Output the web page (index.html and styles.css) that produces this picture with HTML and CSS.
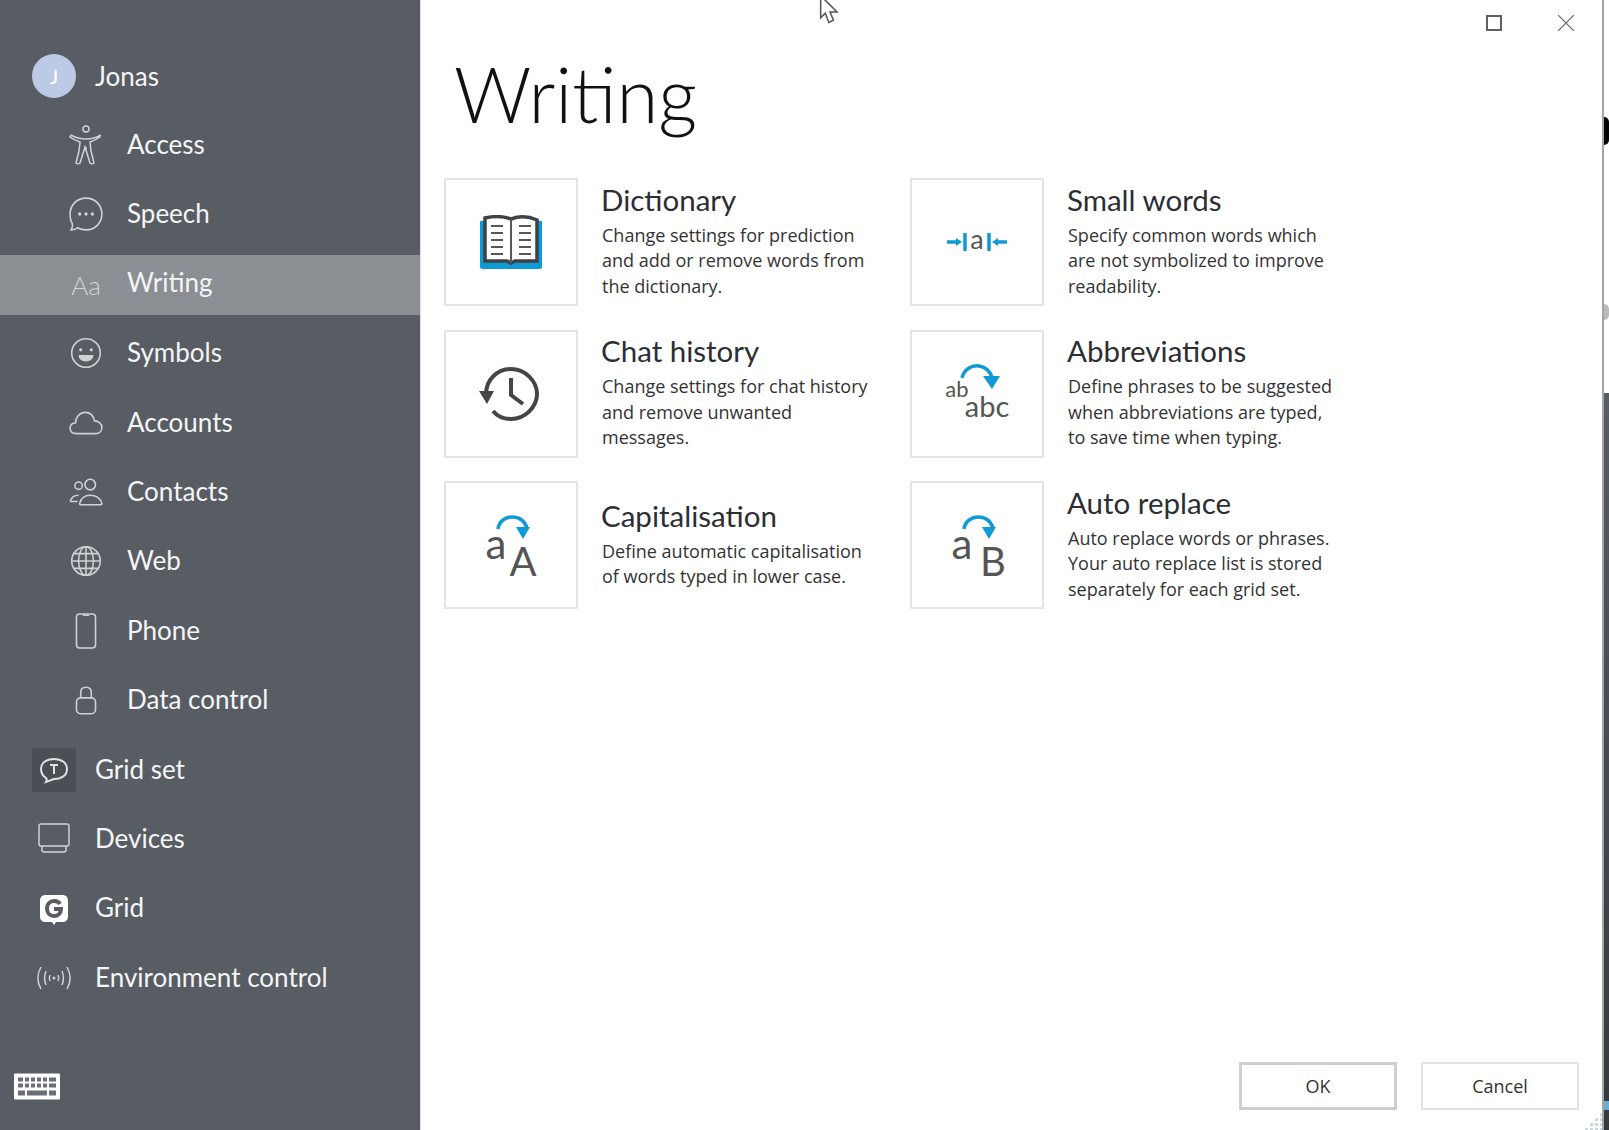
FILE: index.html
```html
<!DOCTYPE html>
<html lang="en">
<head>
  <meta charset="UTF-8">
  <title>Writing</title>
  <link rel="stylesheet" href="styles.css">
</head>
<body>
  <div class="window">
    <aside class="sidebar">
      <ul class="menu">
        <li class="item top user">
          <span class="icon avatar">J</span>
          <span>Jonas</span>
        </li>
        <li class="item sub">
          <svg class="icon tall" viewBox="0 0 34 40"><circle cx="17" cy="4" r="3"/><path d="M2 10c5 3 9 4 15 4s10-1 15-4M2 10l-1 2c4 3 7 4 10 5l-1 9-3 12c1 1 3 1 4 0l5-16 5 16c1 1 3 1 4 0l-3-12-1-9c3-1 6-2 10-5l-1-2M17 22v4"/></svg>
          <span>Access</span>
        </li>
        <li class="item sub">
          <svg class="icon" viewBox="0 0 34 34"><path d="M17 2c9 0 15 7 15 15s-6 15-15 15c-3 0-6-1-8-2-2 2-4 2-6 2 1-2 2-3 1-6-2-3-2-6-2-9C2 9 8 2 17 2z"/><circle class="fill" cx="11" cy="17" r="1.6"/><circle class="fill" cx="17" cy="17" r="1.6"/><circle class="fill" cx="23" cy="17" r="1.6"/></svg>
          <span>Speech</span>
        </li>
        <li class="item sub active">
          <span class="icon glyph">Aa</span>
          <span>Writing</span>
        </li>
        <li class="item sub">
          <svg class="icon" viewBox="0 0 34 34"><circle cx="17" cy="17" r="13.500"/><circle class="fill" cx="12" cy="14" r="1.500"/><circle class="fill" cx="22" cy="14" r="1.500"/><path class="fill" d="M10 19h14c0 4-3 6-7 6s-7-2-7-6z"/></svg>
          <span>Symbols</span>
        </li>
        <li class="item sub">
          <svg class="icon" viewBox="0 0 34 34"><path d="M8 27c-4 0-6-2-6-5s2-5 5-5c0-5 4-10 9-10 5 0 8 3 9 8 4 0 7 3 7 6s-2 6-6 6z"/></svg>
          <span>Accounts</span>
        </li>
        <li class="item sub">
          <svg class="icon" viewBox="0 0 34 34"><circle cx="10" cy="11" r="3.500"/><circle cx="21" cy="10" r="5"/><path d="M11 28c1-5 5-8 10-8s10 3 11 8c0 1-1 1-2 1H12c-1 0-1 0-1-1zM2 26c1-4 4-6 8-6M2 26h7"/></svg>
          <span>Contacts</span>
        </li>
        <li class="item sub">
          <svg class="icon" viewBox="0 0 34 34"><circle cx="17" cy="17" r="13.500"/><ellipse cx="17" cy="17" rx="7" ry="13.500"/><path d="M17 3.500v27M3.500 17h27M5 10h24M5 24h24"/></svg>
          <span>Web</span>
        </li>
        <li class="item sub">
          <svg class="icon" viewBox="0 0 34 34"><rect x="8" y="1" width="18" height="32" rx="3"/><path d="M14 2h6"/></svg>
          <span>Phone</span>
        </li>
        <li class="item sub">
          <svg class="icon" viewBox="0 0 34 34"><rect x="8" y="15" width="18" height="15" rx="4"/><path d="M12 15v-5c0-3 2-5 5-5s5 2 5 5v5"/></svg>
          <span>Data control</span>
        </li>
        <li class="item top">
          <span class="icon tile">
            <svg class="tile-svg" viewBox="0 0 30 30"><path d="M15 4c8 0 13 4 13 10s-5 10-13 10l-8 3c1-2 1-3 0-4-3-2-5-5-5-9C2 8 7 4 15 4z"/><path d="M11 10h8M15 10v9"/></svg>
          </span>
          <span>Grid set</span>
        </li>
        <li class="item top">
          <svg class="icon" viewBox="0 -1 34 36"><rect x="2" y="2" width="30" height="22" rx="2"/><path d="M5 24v4c0 1 1 2 2 2h20c1 0 2-1 2-2v-4"/></svg>
          <span>Devices</span>
        </li>
        <li class="item top">
          <svg class="icon" viewBox="-1 -3 36 36"><path class="solid" d="M9 2h16c4 0 6 2 6 6v15c0 4-2 6-6 6h-6l-2 3-2-3H9c-4 0-6-2-6-6V8c0-4 2-6 6-6z"/><path class="cut" d="M23 11c-1-2-3-3-6-3-4 0-7 3-7 7.500s3 7.500 7 7.500 7-3 7-7h-7"/></svg>
          <span>Grid</span>
        </li>
        <li class="item top">
          <svg class="icon" viewBox="-5 -6 44 36"><circle class="fill" cx="17" cy="12" r="1.500"/><path d="M13 9c-1 2-1 4 0 6M21 9c1 2 1 4 0 6M9 5c-2 5-2 9 0 14M25 5c2 5 2 9 0 14M4 1c-4 7-4 15 0 22M30 1c4 7 4 15 0 22"/></svg>
          <span>Environment control</span>
        </li>
      </ul>
      <svg class="keyboard" viewBox="0 0 48 28"><rect class="kb-body" x="1" y="1" width="46" height="26" rx="1"/><g class="kb-keys"><rect x="5" y="5" width="5" height="4"/><rect x="12" y="5" width="4" height="4"/><rect x="18" y="5" width="4" height="4"/><rect x="24" y="5" width="4" height="4"/><rect x="30" y="5" width="4" height="4"/><rect x="36" y="5" width="7" height="4"/><rect x="5" y="11" width="5" height="4"/><rect x="12" y="11" width="4" height="4"/><rect x="18" y="11" width="4" height="4"/><rect x="24" y="11" width="4" height="4"/><rect x="30" y="11" width="4" height="4"/><rect x="36" y="11" width="7" height="4"/><rect x="5" y="18" width="7" height="5"/><rect x="14" y="18" width="20" height="5"/><rect x="36" y="18" width="7" height="5"/></g></svg>
    </aside>

    <main class="content">
      <div class="title-bar">
        <span class="win-max"></span>
        <svg class="win-close" viewBox="0 0 16 16"><path d="M0 0l16 16M16 0L0 16"/></svg>
      </div>
      <h1>Writing</h1>
      <div class="cards">
        <div class="card">
          <div class="thumb">
            <svg width="62" height="54" viewBox="0 0 62 54"><path class="blue-fill" d="M0 6h62v46c0 1-1 2-2 2H2c-1 0-2-1-2-2z"/><path class="page" d="M5 3c9-2 18-2 26 1 8-3 17-3 26 1v41H35l-4 2-4-2H5z"/><path class="page-line" d="M31 4v44M11 11h12M11 18h12M11 25h12M11 32h12M11 39h12M39 11h12M39 18h12M39 25h12M39 32h12M39 39h12"/></svg>
          </div>
          <div class="text">
            <h2>Dictionary</h2>
            <p>Change settings for prediction<br>and add or remove words from<br>the dictionary.</p>
          </div>
        </div>
        <div class="card">
          <div class="thumb">
            <svg width="62" height="40" viewBox="0 -11 62 40"><path class="blue-line" d="M1 9h12M19 0v18M43 0v18M49 9h12"/><path class="blue-fill" d="M16 9l-6-4v8zM46 9l6-4v8z"/><text class="ic-text" x="31" y="16" font-size="27">a</text></svg>
          </div>
          <div class="text">
            <h2>Small words</h2>
            <p>Specify common words which<br>are not symbolized to improve<br>readability.</p>
          </div>
        </div>
        <div class="card">
          <div class="thumb">
            <svg class="history" width="60" height="54" viewBox="0 0 60 54"><path class="dark-line" d="M7 27C7 13 18 2 32 2s26 12 26 25-12 25-26 25c-8 0-14-3-18-8M32 11v17l12 9"/><path class="dark-fill" d="M0 24h15l-7 13z"/></svg>
          </div>
          <div class="text">
            <h2>Chat history</h2>
            <p>Change settings for chat history<br>and remove unwanted<br>messages.</p>
          </div>
        </div>
        <div class="card">
          <div class="thumb">
            <svg width="66" height="80" viewBox="0 -12 66 80"><path class="blue-line" d="M18 12C20 3 28-1 35 0c7 1 11 6 13 11"/><path class="blue-fill" d="M39 10h17l-8 13z"/><text class="ic-text" x="13" y="31" font-size="22">ab</text><text class="ic-text" x="43" y="51" font-size="29">abc</text></svg>
          </div>
          <div class="text">
            <h2>Abbreviations</h2>
            <p>Define phrases to be suggested<br>when abbreviations are typed,<br>to save time when typing.</p>
          </div>
        </div>
        <div class="card">
          <div class="thumb">
            <svg width="70" height="84" viewBox="-8 -11 70 84"><path class="blue-line" d="M14 15C15 7 22 3 28 3c8 0 13 5 15 11"/><path class="blue-fill" d="M32 13h14l-7 12z"/><text class="ic-text" x="12" y="45" font-size="42">a</text><text class="ic-text" x="39" y="62" font-size="40">A</text></svg>
          </div>
          <div class="text">
            <h2>Capitalisation</h2>
            <p>Define automatic capitalisation<br>of words typed in lower case.</p>
          </div>
        </div>
        <div class="card">
          <div class="thumb">
            <svg width="70" height="84" viewBox="-8 -11 70 84"><path class="blue-line" d="M14 15C15 7 22 3 28 3c8 0 13 5 15 11"/><path class="blue-fill" d="M32 13h14l-7 12z"/><text class="ic-text" x="12" y="45" font-size="42">a</text><text class="ic-text" x="43" y="62" font-size="40">B</text></svg>
          </div>
          <div class="text">
            <h2>Auto replace</h2>
            <p>Auto replace words or phrases.<br>Your auto replace list is stored<br>separately for each grid set.</p>
          </div>
        </div>
      </div>
      <div class="actions">
        <button class="btn default">OK</button>
        <button class="btn">Cancel</button>
      </div>
      <svg class="cursor" width="24" height="28" viewBox="0 0 20 24"><path d="M2-2v19l4-4 3 8 4-2-3-7h6z"/></svg>
      <div class="grip"></div>
    </main>
    <div class="edge">
      <div class="edge-top"></div>
      <div class="edge-bottom"></div>
      <span class="bump black"></span>
      <span class="bump grey"></span>
      <span class="edge-mark"></span>
    </div>
  </div>
</body>
</html>
```

FILE: styles.css
```css
* {
  box-sizing: border-box;
}
html, body {
  margin: 0;
  height: 100%;
  overflow: hidden;
}
body {
  background-color: #fff;
  font-family: "Lato", "Open Sans", sans-serif;
}
.window {
  display: flex;
  height: 1130px;
}

/* sidebar */
.sidebar {
  width: 420px;
  flex: none;
  background-color: #585c63;
  color: #fff;
  padding-top: 41px;
  position: relative;
}
.menu {
  list-style: none;
  margin: 0;
  padding: 0;
}
.item {
  display: flex;
  align-items: center;
  height: 69.4px;
  font-size: 26px;
  color: #f4f5f6;
}
.item > span:last-child {
  padding-bottom: 2px;
}
.item.user > span:last-child {
  padding-bottom: 0;
}
.item.top {
  padding-left: 32px;
}
.item.top > span:last-child {
  margin-left: 19px;
}
.item.sub {
  padding-left: 64px;
}
.item.sub > span:last-child {
  margin-left: 19px;
}
.item.active {
  background-color: #8b8e93;
  height: 60px;
  margin: 5.700px 0 3.700px;
}
.item.active > span:last-child {
  padding-bottom: 5px;
}
.icon {
  width: 44px;
  height: 36px;
  flex: none;
  fill: none;
  stroke: #cfd1d4;
  stroke-width: 1.500;
}
.icon.tall {
  height: 40px;
}
.icon .fill {
  fill: #cfd1d4;
  stroke: none;
}
.icon .solid {
  fill: #fff;
  stroke: none;
}
.icon .cut {
  stroke: #585c63;
  stroke-width: 4;
}
.avatar {
  height: 44px;
  border-radius: 50%;
  background-color: #bccae6;
  font-size: 20px;
  display: flex;
  align-items: center;
  justify-content: center;
  color: #fff;
}
.item.top:first-child .avatar {
  margin-left: 0;
}
.tile {
  height: 44px;
  background-color: #4b4e54;
  display: flex;
  align-items: center;
  justify-content: center;
}
.tile-svg {
  width: 30px;
  height: 30px;
  fill: none;
  stroke: #e0e1e3;
  stroke-width: 2;
}
.glyph {
  color: #d3d5d7;
  font-size: 26px;
  font-weight: 300;
  text-align: center;
  line-height: 36px;
}
.keyboard {
  position: absolute;
  left: 13px;
  top: 1072px;
  width: 48px;
  height: 29px;
}
.kb-body {
  fill: #fff;
}
.kb-keys {
  fill: #6a6e75;
}

/* content */
.content {
  flex: 1;
  position: relative;
  display: flex;
  flex-direction: column;
  padding-left: 23px;
  border-left: 1px solid #dcdcdc;
}
.title-bar {
  height: 46px;
  display: flex;
  align-items: center;
  justify-content: flex-end;
  gap: 56px;
  padding-right: 28px;
}
.win-max {
  width: 16px;
  height: 16px;
  border: 2px solid #606060;
}
.win-close {
  width: 16px;
  height: 16px;
  fill: none;
  stroke: #666;
  stroke-width: 1.200;
}
h1 {
  margin: 0 0 0 10px;
  height: 132px;
  font-size: 76px;
  font-weight: 300;
  line-height: 96px;
  color: #111;
}
.cards {
  display: grid;
  grid-template-columns: 466px 466px;
  grid-auto-rows: 128px;
  row-gap: 23.500px;
  align-self: flex-start;
}
.card {
  display: flex;
  align-items: center;
}
.thumb {
  width: 134px;
  height: 128px;
  flex: none;
  border: 2px solid #e4e4e4;
  display: flex;
  align-items: center;
  justify-content: center;
}
.history {
  margin-right: 4px;
}
.text {
  margin-left: 23px;
  padding-bottom: 3px;
}
h2 {
  margin: 0 0 5px;
  font-size: 29.500px;
  font-weight: 400;
  line-height: 36px;
  color: #2c2e33;
}
.text p {
  margin: 0 0 0 1px;
  font-family: "Open Sans", sans-serif;
  font-size: 18px;
  line-height: 25.400px;
  color: #333;
}
.blue-line {
  fill: none;
  stroke: #0f9ad6;
  stroke-width: 3.500;
}
.blue-fill {
  fill: #0f9ad6;
}
.dark-line {
  fill: none;
  stroke: #454545;
  stroke-width: 4;
}
.dark-fill {
  fill: #454545;
}
.page {
  fill: #fff;
  stroke: #3e4246;
  stroke-width: 3.500;
}
.page-line {
  fill: none;
  stroke: #55595d;
  stroke-width: 2;
}
.ic-text {
  fill: #555;
  font-family: "Lato", sans-serif;
  text-anchor: middle;
}
.actions {
  position: absolute;
  right: 23px;
  top: 1062px;
  display: flex;
  gap: 24px;
}
.btn {
  width: 158px;
  height: 48px;
  background-color: #fff;
  border: 2px solid #e2e2e2;
  font-family: "Open Sans", sans-serif;
  font-size: 18px;
  color: #333;
}
.btn.default {
  border: 3px solid #cfcfcf;
}
.cursor {
  position: absolute;
  left: 397px;
  top: -2px;
  fill: #fff;
  stroke: #555;
  stroke-width: 1.300;
}
.grip {
  position: absolute;
  right: 0;
  bottom: 0;
  width: 18px;
  height: 18px;
  background-image: radial-gradient(#c9d6e6 1.500px, transparent 2px);
  background-size: 5px 5px;
  clip-path: polygon(100% 0, 100% 100%, 0 100%);
}

/* strip of the desktop right of the window */
.edge {
  width: 7px;
  flex: none;
  position: relative;
  border-left: 2px solid #a3a4a8;
  display: flex;
  flex-direction: column;
}
.edge-top {
  height: 393px;
  background-color: #fff;
}
.edge-bottom {
  flex: 1;
  background-image: linear-gradient(#585c63, #35383d);
}
.bump {
  position: absolute;
  left: 0;
  width: 5px;
  border-radius: 0 12px 12px 0;
}
.bump.black {
  top: 117px;
  height: 28px;
  background-color: #000;
}
.bump.grey {
  top: 304px;
  height: 16px;
  background-color: #bbb;
}
.edge-mark {
  position: absolute;
  left: 0;
  top: 1101px;
  width: 5px;
  height: 9px;
  background-color: #6aaed6;
}
```
